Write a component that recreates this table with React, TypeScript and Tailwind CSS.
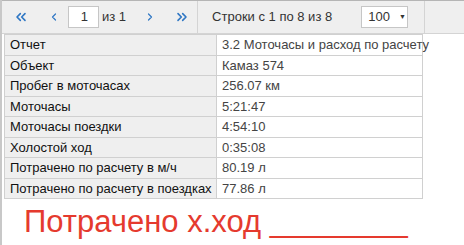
import { ChevronLeft, ChevronRight, ChevronsLeft, ChevronsRight } from "lucide-react";

type ReportRow = {
  label: string;
  value: string;
};

const rows: ReportRow[] = [
  { label: "Отчет", value: "3.2 Моточасы и расход по расчету" },
  { label: "Объект", value: "Камаз 574" },
  { label: "Пробег в моточасах", value: "256.07 км" },
  { label: "Моточасы", value: "5:21:47" },
  { label: "Моточасы поездки", value: "4:54:10" },
  { label: "Холостой ход", value: "0:35:08" },
  { label: "Потрачено по расчету в м/ч", value: "80.19 л" },
  { label: "Потрачено по расчету в поездках", value: "77.86 л" },
];

export default function App() {
  return (
    <div
      className="h-[245px] w-[464px] overflow-hidden border-l-2 border-[#c8c8c8] bg-white text-[13px] text-[#333]"
      style={{ fontFamily: '"Liberation Sans", Arial, sans-serif' }}
    >
      <div className="flex h-[34px] items-center border-t border-b border-[#b5b5b5] border-b-[#d4d4d4] bg-[#efefef]">
        <button className="ml-[10px] flex w-[18px] justify-center text-[#2f77c4]">
          <ChevronsLeft size={16} strokeWidth={2.4} />
        </button>
        <button className="ml-[18px] flex w-[12px] justify-center text-[#2f77c4]">
          <ChevronLeft size={16} strokeWidth={2.4} />
        </button>
        <div className="ml-[8px] flex h-[22px] w-[31px] items-center justify-end border border-[#c6c6c6] bg-white pr-[10px]">
          1
        </div>
        <span className="ml-[3px]">из 1</span>
        <button className="ml-[18px] flex w-[12px] justify-center text-[#2f77c4]">
          <ChevronRight size={16} strokeWidth={2.4} />
        </button>
        <button className="ml-[17px] flex w-[18px] justify-center text-[#2f77c4]">
          <ChevronsRight size={16} strokeWidth={2.4} />
        </button>
        <div className="ml-[6px] h-full w-px bg-[#d4d4d4]" />
        <span className="ml-[14px] whitespace-nowrap">Строки с 1 по 8 из 8</span>
        <div className="ml-[29px] flex h-[22px] w-[47px] shrink-0 items-center border border-[#c6c6c6] bg-white pl-[6px]">
          100
          <span className="ml-[9px] text-[7px]">▼</span>
        </div>
        <div className="ml-[16px] h-full w-px bg-[#d4d4d4]" />
      </div>

      <table className="ml-[2px] w-[418px] table-fixed border-collapse">
        <colgroup>
          <col className="w-[212px]" />
          <col className="w-[206px]" />
        </colgroup>
        <tbody>
          {rows.map((row) => (
            <tr key={row.label} className="h-[20px]">
              <td className="whitespace-nowrap border border-[#d0d0d0] bg-[#efefef] px-[5px] py-0 font-medium text-[#111]">
                {row.label}
              </td>
              <td className="whitespace-nowrap border border-[#d0d0d0] px-[5px] py-0 text-[#444]">
                {row.value}
              </td>
            </tr>
          ))}
        </tbody>
      </table>

      <p className="ml-[22px] mt-[3px] whitespace-nowrap text-[31px] leading-[40px] text-[#e53a2e]">
        Потрачено х.ход ________
      </p>
    </div>
  );
}
